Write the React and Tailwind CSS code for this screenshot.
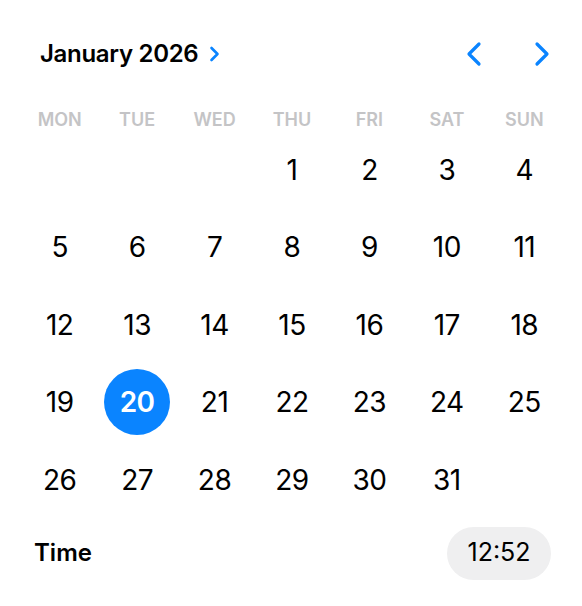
import React from "react";

const days = [];
for (let i = 0; i < 3; i++) days.push(null);
for (let d = 1; d <= 31; d++) days.push(d);

function Chevron({ dir = "right" }) {
  const d = dir === "right" ? "M3 3 L13 13 L3 23" : "M13 3 L3 13 L13 23";
  return (
    <svg width={16} height={26} viewBox="0 0 16 26" fill="none">
      <path d={d} stroke="#0a84ff" strokeWidth={3.2} strokeLinecap="round" strokeLinejoin="round" />
    </svg>
  );
}

export default function App() {
  const labels = ["MON", "TUE", "WED", "THU", "FRI", "SAT", "SUN"];
  return (
    <div className="w-[582px] h-[606px] bg-white text-black" style={{ fontFamily: "Inter, 'Noto Sans', sans-serif" }}>
      <div className="flex items-center justify-between pt-[38px] pl-[40px] pr-[32px] h-[70px]">
        <div className="flex items-center gap-[11px]">
          <span className="text-[24px] font-semibold tracking-[-0.3px]">January 2026</span>
          <svg width="11" height="16" viewBox="0 0 11 16" fill="none">
            <path d="M2.5 2 L8.5 8 L2.5 14" stroke="#0a84ff" strokeWidth="2.6" strokeLinecap="round" strokeLinejoin="round" />
          </svg>
        </div>
        <div className="flex items-center gap-[52px]">
          <Chevron dir="left" />
          <Chevron dir="right" />
        </div>
      </div>
      <div className="ml-[21px] w-[542px]">
        <div className="grid grid-cols-7 mt-[36px] h-[24px] items-center">
          {labels.map((l) => (
            <div key={l} className="text-center text-[18px] font-semibold text-[#c4c4c6]">{l}</div>
          ))}
        </div>
        <div className="grid grid-cols-7 mt-[1px]">
          {days.map((d, i) => (
            <div key={i} className="h-[77.5px] flex items-center justify-center">
              {d === 20 ? (
                <div className="w-[66px] h-[66px] rounded-full bg-[#0a84ff] text-white flex items-center justify-center text-[28px] font-semibold tracking-[-0.5px]">20</div>
              ) : (
                <span className="text-[28px] tracking-[-0.5px]">{d ?? ""}</span>
              )}
            </div>
          ))}
        </div>
      </div>
      <div className="flex items-center justify-between pl-[34px] pr-[31px] mt-[8px]">
        <span className="text-[24px] font-semibold">Time</span>
        <div className="h-[53px] w-[104px] rounded-full bg-[#efeff0] flex items-center justify-center text-[25px]">12:52</div>
      </div>
    </div>
  );
}
